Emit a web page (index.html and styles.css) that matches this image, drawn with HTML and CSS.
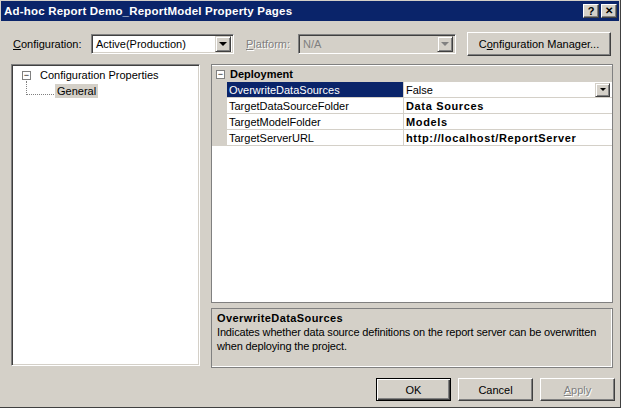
FILE: index.html
```html
<!DOCTYPE html>
<html lang="en">
<head>
    <meta charset="UTF-8">
    <title>Ad-hoc Report Demo_ReportModel Property Pages</title>
    <link rel="stylesheet" href="styles.css">
</head>
<body>
    <div class="window">
        <div class="titlebar">
            <span class="title">Ad-hoc Report Demo_ReportModel Property Pages</span>
            <div class="caption-buttons">
                <span class="cap-btn">?</span>
                <span class="cap-btn close">&#x2715;</span>
            </div>
        </div>

        <div class="config-row">
            <label class="field-label"><u>C</u>onfiguration:</label>
            <div class="combo config-combo">
                <span class="combo-text">Active(Production)</span>
                <span class="combo-arrow"><i></i></span>
            </div>
            <label class="field-label disabled"><u>P</u>latform:</label>
            <div class="combo platform-combo disabled">
                <span class="combo-text">N/A</span>
                <span class="combo-arrow"><i></i></span>
            </div>
            <button class="btn manager-btn">C<u>o</u>nfiguration Manager...</button>
        </div>

        <div class="main">
            <div class="tree sunken">
                <div class="tree-node">
                    <span class="expander">&minus;</span>
                    <span class="node-label">Configuration Properties</span>
                </div>
                <div class="tree-child">
                    <span class="dots"></span>
                    <span class="node-label selected">General</span>
                </div>
            </div>

            <div class="right-col">
                <div class="prop-grid">
                    <div class="category">
                        <span class="gutter"><span class="expander">&minus;</span></span>
                        <span class="cat-label">Deployment</span>
                    </div>
                    <div class="prop-row active">
                        <span class="gutter"></span>
                        <span class="prop-name">OverwriteDataSources</span>
                        <span class="prop-value">False<span class="combo-arrow small"><i></i></span></span>
                    </div>
                    <div class="prop-row">
                        <span class="gutter"></span>
                        <span class="prop-name">TargetDataSourceFolder</span>
                        <span class="prop-value bold">Data Sources</span>
                    </div>
                    <div class="prop-row">
                        <span class="gutter"></span>
                        <span class="prop-name">TargetModelFolder</span>
                        <span class="prop-value bold">Models</span>
                    </div>
                    <div class="prop-row">
                        <span class="gutter"></span>
                        <span class="prop-name">TargetServerURL</span>
                        <span class="prop-value bold">http://localhost/ReportServer</span>
                    </div>
                </div>

                <div class="description">
                    <div class="desc-title">OverwriteDataSources</div>
                    <div class="desc-text">Indicates whether data source definitions on the report server can be overwritten when deploying the project.</div>
                </div>
            </div>
        </div>

        <div class="button-row">
            <button class="btn default">OK</button>
            <button class="btn">Cancel</button>
            <button class="btn disabled"><u>A</u>pply</button>
        </div>
    </div>
</body>
</html>
```

FILE: styles.css
```css
* {
    margin: 0;
    padding: 0;
    box-sizing: border-box;
}

body {
    background: #fff;
    font-family: "Liberation Sans", Arial, sans-serif;
    font-size: 11px;
    color: #000;
}

.window {
    width: 621px;
    height: 408px;
    background: #d4d0c8;
    border-right: 1px solid #404040;
    border-bottom: 1px solid #404040;
    padding: 1px 1px 0 1px;
}

/* Title bar */
.titlebar {
    height: 20px;
    background: #0a246a;
    color: #fff;
    display: flex;
    align-items: center;
    justify-content: space-between;
    padding: 0 2px 0 3px;
}

.title {
    font-weight: bold;
    font-size: 11.5px;
    letter-spacing: 0.2px;
}

.caption-buttons {
    display: flex;
    gap: 2px;
}

.cap-btn {
    width: 16px;
    height: 14px;
    background: #d4d0c8;
    color: #000;
    font-weight: bold;
    font-size: 11px;
    line-height: 12px;
    text-align: center;
    border: 1px solid;
    border-color: #fff #404040 #404040 #fff;
    box-shadow: inset -1px -1px #808080;
}

.cap-btn.close {
    font-size: 10px;
}

/* Configuration row */
.config-row {
    display: flex;
    align-items: center;
    height: 24px;
    margin: 11px 0 0 12px;
}

.field-label {
    width: 78px;
}

.field-label.disabled {
    color: #808080;
    text-shadow: 1px 1px #fff;
    width: 52px;
    margin-left: 12px;
}

.combo {
    height: 20px;
    display: flex;
    align-items: center;
    background: #fff;
    border: 1px solid;
    border-color: #808080 #fff #fff #808080;
    box-shadow: inset 1px 1px #404040, inset -1px -1px #d4d0c8;
    padding: 2px;
}

.combo-text {
    flex: 1;
    padding-left: 2px;
}

.config-combo {
    width: 143px;
}

.platform-combo {
    width: 158px;
}

.combo.disabled {
    background: #d4d0c8;
    color: #808080;
}

.combo-arrow {
    width: 16px;
    height: 16px;
    background: #d4d0c8;
    border: 1px solid;
    border-color: #d4d0c8 #404040 #404040 #d4d0c8;
    box-shadow: inset 1px 1px #fff, inset -1px -1px #808080;
    display: flex;
    align-items: center;
    justify-content: center;
}

.combo-arrow i {
    width: 0;
    height: 0;
    border-left: 4px solid transparent;
    border-right: 4px solid transparent;
    border-top: 4px solid #000;
}

.combo.disabled .combo-arrow i {
    border-top-color: #808080;
}

.combo-arrow.small {
    width: 15px;
    height: 14px;
    margin-left: auto;
}

.combo-arrow.small i {
    border-left-width: 3px;
    border-right-width: 3px;
    border-top-width: 3px;
}

.btn {
    font-family: inherit;
    font-size: 11px;
    background: #d4d0c8;
    color: #000;
    border: 1px solid;
    border-color: #fff #404040 #404040 #fff;
    box-shadow: inset -1px -1px #808080;
    height: 23px;
}

.manager-btn {
    width: 144px;
    height: 24px;
    margin-left: 11px;
}

/* Main area */
.main {
    display: flex;
    margin: 8px 0 0 10px;
    gap: 11px;
}

.sunken {
    border: 1px solid;
    border-color: #808080 #fff #fff #808080;
    box-shadow: inset 1px 1px #404040, inset -1px -1px #d4d0c8;
}

.tree {
    width: 189px;
    height: 302px;
    background: #fff;
    padding: 2px 0 0 10px;
}

.tree-node {
    display: flex;
    align-items: center;
    height: 16px;
}

.expander {
    width: 9px;
    height: 9px;
    border: 1px solid #808080;
    background: #fff;
    font-size: 9px;
    line-height: 7px;
    text-align: center;
    margin-right: 7px;
    color: #000;
}

.tree-child {
    display: flex;
    align-items: center;
    height: 16px;
    padding-left: 4px;
}

.dots {
    width: 28px;
    height: 14px;
    border-left: 1px dotted #808080;
    border-bottom: 1px dotted #808080;
    margin-top: -6px;
    margin-right: 1px;
}

.node-label {
    padding: 1px 2px;
}

.node-label.selected {
    background: #d4d0c8;
}

.right-col {
    width: 402px;
    display: flex;
    flex-direction: column;
    gap: 5px;
}

/* Property grid */
.prop-grid {
    height: 239px;
    background: #fff;
    border: 1px solid #808080;
    padding-top: 1px;
}

.category,
.prop-row {
    display: flex;
    height: 16px;
}

.category {
    background: #d4d0c8;
    align-items: center;
}

.gutter {
    width: 15px;
    height: 100%;
    background: #d4d0c8;
    display: flex;
    align-items: center;
    justify-content: center;
    flex-shrink: 0;
}

.category .expander {
    margin: 0 0 0 2px;
}

.cat-label {
    font-weight: bold;
    padding-left: 3px;
}

.prop-name,
.prop-value {
    display: flex;
    align-items: center;
    padding-left: 2px;
    border-bottom: 1px solid #d4d0c8;
}

.prop-name {
    width: 177px;
    border-right: 1px solid #d4d0c8;
}

.prop-value {
    flex: 1;
    padding-right: 2px;
}

.prop-value.bold {
    font-weight: bold;
    letter-spacing: 0.65px;
}

.prop-row.active .prop-name {
    background: #0a246a;
    color: #fff;
}

/* Description panel */
.description {
    height: 60px;
    border: 1px solid #808080;
    box-shadow: inset -1px -1px #fff;
    padding: 3px 5px;
}

.desc-title {
    font-weight: bold;
    line-height: 13px;
    letter-spacing: 0.4px;
}

.desc-text {
    line-height: 14px;
    letter-spacing: -0.15px;
}

/* Bottom buttons */
.button-row {
    display: flex;
    justify-content: flex-end;
    gap: 7px;
    margin: 10px 4px 0 0;
}

.button-row .btn {
    width: 75px;
}

.btn.default {
    border: 1px solid #000;
    box-shadow: inset 1px 1px #fff, inset -1px -1px #404040, inset -2px -2px #808080;
}

.btn.disabled {
    color: #808080;
    text-shadow: 1px 1px #fff;
}
```
